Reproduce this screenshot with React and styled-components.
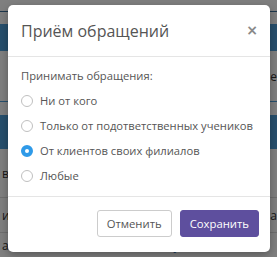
import styled, { createGlobalStyle } from 'styled-components'

const Global = createGlobalStyle`
  html, body { margin: 0; padding: 0; }
  body {
    width: 277px;
    height: 257px;
    overflow: hidden;
    font-family: "Open Sans", "Noto Sans", sans-serif;
    background: #fff;
  }
`

const Screen = styled.div`
  position: relative;
  width: 277px;
  height: 257px;
  overflow: hidden;
`

const Page = styled.div`
  display: flex;
  flex-direction: column;
  background: #fff;
  font-size: 12px;
  color: #333;
`

const Strip = styled.div`
  height: ${p => p.h}px;
  background: ${p => (p.blue ? '#4f9fd8' : '#fff')};
  border-bottom: ${p => (p.line ? `1px solid ${p.line}` : 'none')};
  display: flex;
  align-items: center;
  justify-content: space-between;
  padding: 0 0 0 2px;
  box-sizing: border-box;
  white-space: nowrap;
`

const Link = styled.span`
  color: #2a6bb0;
  margin-right: 90px;
`

const Backdrop = styled.div`
  position: absolute;
  inset: 0;
  background: rgba(0, 0, 0, 0.5);
`

const Modal = styled.div`
  position: absolute;
  left: 8px;
  top: 5px;
  width: 262px;
  height: 247px;
  background: #fff;
  border-radius: 5px;
  box-shadow: 0 3px 9px rgba(0, 0, 0, 0.3);
  display: flex;
  flex-direction: column;
  overflow: hidden;
`

const Header = styled.div`
  height: 51px;
  display: flex;
  align-items: center;
  justify-content: space-between;
  padding: 0 12px 0 13px;
  border-bottom: 1px solid #e5e5e5;
`

const Title = styled.h4`
  margin: 0;
  font-size: 16px;
  font-weight: 400;
  color: #555;
`

const Close = styled.button`
  border: 0;
  background: none;
  padding: 0;
  font-family: "DejaVu Sans", sans-serif;
  font-size: 14px;
  font-weight: 700;
  line-height: 1;
  color: #8a8a8a;
  margin-top: -1px;
`

const Body = styled.div`
  flex: 1;
  padding: 10px 13px 0;
  display: flex;
  flex-direction: column;
  border-bottom: 1px solid #e5e5e5;
`

const Lead = styled.div`
  font-size: 11.2px;
  color: #555;
  height: 18px;
  line-height: 18px;
  margin-bottom: 3px;
`

const Option = styled.label`
  display: flex;
  align-items: center;
  gap: 7px;
  height: 25px;
  font-size: 11.2px;
  color: #555;
  white-space: nowrap;
`

const Radio = styled.span`
  width: 12px;
  height: 12px;
  border-radius: 50%;
  box-sizing: border-box;
  flex: none;
  border: ${p => (p.checked ? '4px solid #2f9ae8' : '1px solid #c0c0c0')};
  background: #fff;
`

const Footer = styled.div`
  height: 53px;
  display: flex;
  align-items: center;
  justify-content: flex-end;
  gap: 8px;
  padding: 0 11px 2px;
`

const Button = styled.button`
  height: 27px;
  padding: 0 9px;
  border-radius: 3px;
  font-family: inherit;
  font-size: 11.3px;
  border: 1px solid ${p => (p.primary ? '#5e4f9e' : '#ccc')};
  background: ${p => (p.primary ? '#5e4f9e' : '#fff')};
  color: ${p => (p.primary ? '#fff' : '#555')};
`

const options = [
  'Ни от кого',
  'Только от подответственных учеников',
  'От клиентов своих филиалов',
  'Любые',
]

export default function App() {
  return (
    <Screen>
      <Global />
      <Page>
        <Strip h={12} line="#3b6f99" />
        <Strip h={12} />
        <Strip h={27} blue />
        <Strip h={51} line="#4f9fd8"><span /><span>Ме</span></Strip>
        <Strip h={13} />
        <Strip h={34} blue />
        <Strip h={49} line="#ddd"><span>вы</span></Strip>
        <Strip h={35} line="#ddd"><span>и</span><span>за</span></Strip>
        <Strip h={24}><span>а</span><Link>гуп</Link></Strip>
      </Page>
      <Backdrop />
      <Modal>
        <Header>
          <Title>Приём обращений</Title>
          <Close>×</Close>
        </Header>
        <Body>
          <Lead>Принимать обращения:</Lead>
          {options.map((o, i) => (
            <Option key={o}>
              <Radio checked={i === 2} />
              {o}
            </Option>
          ))}
        </Body>
        <Footer>
          <Button>Отменить</Button>
          <Button primary>Сохранить</Button>
        </Footer>
      </Modal>
    </Screen>
  )
}
